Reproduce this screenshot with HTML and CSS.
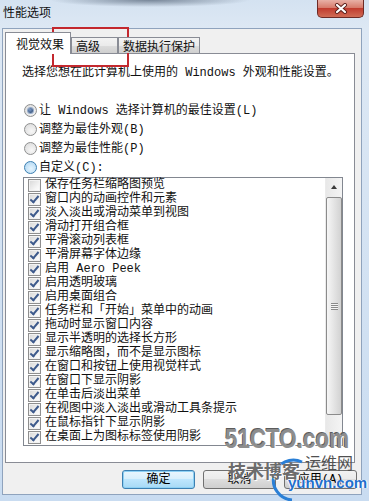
FILE: index.html
```html
<!DOCTYPE html>
<html lang="zh-CN">
<head>
  <meta charset="UTF-8" />
  <title>性能选项</title>
  <link rel="stylesheet" href="styles.css">
</head>
<body>
  <div class="window">

    <!-- Thanh tiêu đề -->
    <div class="titlebar">
      <span class="title">性能选项</span>
      <div class="close">
        <svg width="14" height="11" viewBox="0 0 14 11">
          <path d="M3 2 L11 9 M11 2 L3 9" stroke="#5a1f1a" stroke-width="4" stroke-linecap="round"/>
          <path d="M3 2 L11 9 M11 2 L3 9" stroke="#fff" stroke-width="2.2" stroke-linecap="round"/>
        </svg>
      </div>
    </div>

    <div class="client">
      <div class="tabs">
        <div class="tab active">视觉效果</div>
        <div class="tab t-adv">高级</div>
        <div class="tab t-dep">数据执行保护</div>
      </div>

      <div class="panel">
        <p class="intro">选择您想在此计算机上使用的 Windows 外观和性能设置。</p>

        <div class="radios">
          <div class="radio checked"><span class="dot"></span>让 Windows 选择计算机的最佳设置(L)</div>
          <div class="radio"><span class="dot"></span>调整为最佳外观(B)</div>
          <div class="radio"><span class="dot"></span>调整为最佳性能(P)</div>
          <div class="radio hover"><span class="dot"></span>自定义(C):</div>
        </div>

        <div class="listbox">
          <ul class="items">
            <li><span class="box"></span>保存任务栏缩略图预览</li>
            <li class="on"><span class="box"></span>窗口内的动画控件和元素</li>
            <li class="on"><span class="box"></span>淡入淡出或滑动菜单到视图</li>
            <li class="on"><span class="box"></span>滑动打开组合框</li>
            <li class="on"><span class="box"></span>平滑滚动列表框</li>
            <li class="on"><span class="box"></span>平滑屏幕字体边缘</li>
            <li class="on"><span class="box"></span>启用 Aero Peek</li>
            <li class="on"><span class="box"></span>启用透明玻璃</li>
            <li class="on"><span class="box"></span>启用桌面组合</li>
            <li class="on"><span class="box"></span>任务栏和「开始」菜单中的动画</li>
            <li class="on"><span class="box"></span>拖动时显示窗口内容</li>
            <li class="on"><span class="box"></span>显示半透明的选择长方形</li>
            <li class="on"><span class="box"></span>显示缩略图，而不是显示图标</li>
            <li class="on"><span class="box"></span>在窗口和按钮上使用视觉样式</li>
            <li class="on"><span class="box"></span>在窗口下显示阴影</li>
            <li class="on"><span class="box"></span>在单击后淡出菜单</li>
            <li class="on"><span class="box"></span>在视图中淡入淡出或滑动工具条提示</li>
            <li class="on"><span class="box"></span>在鼠标指针下显示阴影</li>
            <li class="on"><span class="box"></span>在桌面上为图标标签使用阴影</li>
          </ul>
          <div class="scrollbar">
            <div class="arrow"><span></span></div>
            <div class="thumb"><span class="grip"></span></div>
          </div>
        </div>
      </div>

      <div class="buttons">
        <button class="btn default">确定</button>
        <button class="btn">取消</button>
        <button class="btn">应用(A)</button>
      </div>
    </div>

    <!-- Khung đỏ đánh dấu -->
    <div class="annot"></div>

    <!-- Watermark -->
    <div class="mark">
      <div class="mark-big">51CTO.com</div>
      <svg class="mark-arc" width="50" height="48" viewBox="0 0 50 48">
        <path d="M40 8 A20 20 0 1 0 30 46" fill="none" stroke="#2a7fd6" stroke-width="3"/>
      </svg>
      <div class="mark-blog">技术博客</div>
      <div class="mark-yw">运维网</div>
      <div class="mark-url">yunvn.com</div>
    </div>
  </div>
</body>
</html>
```

FILE: styles.css
```css
/* Cơ bản */
html, body {
  margin: 0; padding: 0;
}
body {
  width: 369px;
  height: 501px;
  overflow: hidden;
  font: 12px/14px "Liberation Mono", "Noto Sans CJK SC", monospace;
  color: #111;
}
.window {
  position: relative;
  height: 501px;
  background:
    radial-gradient(ellipse 100px 7px at 150px 0, rgba(70,85,105,0.65), transparent),
    linear-gradient(#d4e2f1, #dde8f4 28px, #c9dcf1);
}

/* Thanh tiêu đề */
.titlebar {
  display: flex;
  justify-content: space-between;
  align-items: flex-start;
  height: 28px;
}
.title {
  padding: 7px 0 0 3px;
  line-height: 14px;
}
.close {
  width: 47px;
  height: 18px;
  margin-right: 5px;
  box-sizing: border-box;
  border: 1px solid #6d2a25;
  border-top: 0;
  border-radius: 0 0 5px 5px;
  background: linear-gradient(#e8b0a6, #d77b6c 45%, #c13c2f 50%, #d06b55);
  display: flex;
  align-items: center;
  justify-content: center;
}

/* Vùng client */
.client {
  margin-left: 2px;
  width: 360px;
  height: 467px;
  box-sizing: border-box;
  border: 1px solid #8fa3bd;
  background: #f0f0f0;
}
.tabs {
  display: flex;
  align-items: flex-end;
  margin: 3px 0 0 2px;
  position: relative;
  z-index: 1;
}
.tab {
  box-sizing: border-box;
  border: 1px solid #898c95;
  border-bottom: 0;
  white-space: nowrap;
}
.tab.active {
  width: 66px;
  height: 22px;
  margin-bottom: -1px;
  padding: 6px 0 0 10px;
  background: #fff;
}
.t-adv, .t-dep {
  height: 16px;
  padding: 3px 0 0 4px;
  background: linear-gradient(#f3f3f3, #ebebeb 50%, #dddddd 50%, #cfcfcf);
}
.t-adv { width: 47px; }
.t-dep { width: 82px; }

.panel {
  margin-left: 2px;
  width: 350px;
  height: 410px;
  box-sizing: border-box;
  border: 1px solid #898c95;
  background: #fff;
  padding: 12px 0 0 16px;
}
.intro {
  margin: 0;
  white-space: nowrap;
}
.radios {
  margin-top: 21px;
  padding-left: 2px;
}
.radio {
  height: 19px;
  display: flex;
  align-items: center;
}
.radio .dot {
  width: 13px;
  height: 13px;
  box-sizing: border-box;
  margin-right: 2px;
  border: 1px solid #8e8f8f;
  border-radius: 50%;
  background: radial-gradient(circle at 60% 65%, #f7f7f7, #d8d8d8);
  display: flex;
  align-items: center;
  justify-content: center;
}
.radio.checked .dot::after {
  content: '';
  width: 5px;
  height: 5px;
  border-radius: 50%;
  background: radial-gradient(circle at 40% 35%, #7e9cc8, #1f3c66);
  box-shadow: 0 0 0 1px #93a9c8;
}
.radio.hover .dot {
  border-color: #3c7fb1;
  background: radial-gradient(circle at 55% 60%, #e5f4fd, #a9d3f2);
}

/* Danh sách checkbox */
.listbox {
  margin-left: 1px;
  width: 320px;
  height: 269px;
  box-sizing: border-box;
  border: 1px solid #828790;
  display: flex;
}
.items {
  list-style: none;
  margin: 0; padding: 0;
  flex: 1;
}
.items li {
  height: 14px;
  display: flex;
  align-items: center;
  padding-left: 4px;
  white-space: nowrap;
}
.box {
  position: relative;
  width: 13px;
  height: 13px;
  box-sizing: border-box;
  margin-right: 4px;
  border: 1px solid #8f8f8f;
  background: linear-gradient(135deg, #d6d6d6, #f6f6f6 70%, #ffffff);
  box-shadow: inset 0 0 0 1px #f2f2f2;
}
.items li.on .box::after {
  content: '';
  position: absolute;
  left: 3px; top: 0;
  width: 3px;
  height: 7px;
  border: solid #3d5a8c;
  border-width: 0 2px 2px 0;
  transform: rotate(40deg);
}
.scrollbar {
  width: 17px;
  background: linear-gradient(90deg, #e8e8e8, #f4f4f4);
  border-left: 1px solid #ebebeb;
  box-sizing: border-box;
}
.arrow {
  height: 18px;
  display: flex;
  align-items: center;
  justify-content: center;
}
.arrow span {
  width: 0; height: 0;
  border-left: 3px solid transparent;
  border-right: 3px solid transparent;
  border-bottom: 4px solid #3a3a3a;
}
.thumb {
  margin: 1px 0 0 0;
  height: 218px;
  box-sizing: border-box;
  border: 1px solid #8b8b8b;
  border-radius: 2px;
  background: linear-gradient(90deg, #f6f6f6, #e4e4e4 50%, #d2d2d2);
  display: flex;
  align-items: center;
  justify-content: center;
}
.grip {
  width: 7px;
  height: 7px;
  background: repeating-linear-gradient(#8a8a8a 0 1px, #f4f4f4 1px 2px);
}

/* Nút bấm */
.buttons {
  display: flex;
  justify-content: flex-end;
  gap: 8px;
  padding: 7px 4px 0 0;
}
.btn {
  width: 73px;
  height: 19px;
  padding: 0;
  box-sizing: border-box;
  border: 1px solid #707070;
  border-radius: 3px;
  font: inherit;
  line-height: 14px;
  color: #000;
  background: linear-gradient(#f2f2f2, #ebebeb 45%, #dddddd 50%, #cfcfcf);
}
.btn.default {
  border-color: #3c7fb1;
  box-shadow: inset 0 0 0 1px #8ed1f4;
  background: linear-gradient(#eaf6fd, #d9f0fc 45%, #bee6fd 50%, #a7d9f5);
}

/* Khung đỏ */
.annot {
  position: absolute;
  left: 52px; top: 27px;
  width: 77px;
  height: 40px;
  box-sizing: border-box;
  border: 2px solid #c3282e;
}

/* Watermark */
.mark {
  position: absolute;
  left: 222px; top: 424px;
  width: 147px;
  height: 77px;
  font-family: "Liberation Sans", "Noto Sans CJK SC", sans-serif;
  font-weight: bold;
}
.mark-big {
  position: absolute;
  left: 3px; top: 0;
  font-size: 28px;
  line-height: 30px;
  color: #8d8d8d;
  transform: scaleX(0.8);
  transform-origin: left top;
  text-shadow: 1px 1px 0 #fff, -1px -1px 0 #5c5c5c;
}
.mark-arc {
  position: absolute;
  left: 40px; top: 30px;
}
.mark-blog {
  position: absolute;
  left: 6px; top: 37px;
  font-size: 18px;
  line-height: 22px;
  color: #6c6c6c;
  text-shadow: 1px 1px 0 #fff;
}
.mark-yw {
  position: absolute;
  left: 83px; top: 31px;
  font-size: 16px;
  line-height: 18px;
  color: #505050;
  font-weight: normal;
}
.mark-url {
  position: absolute;
  left: 66px; top: 51px;
  font-size: 15px;
  line-height: 16px;
  color: #1f6fcc;
  text-shadow: 1px 0 0 #fff, -1px 0 0 #fff;
}
```
